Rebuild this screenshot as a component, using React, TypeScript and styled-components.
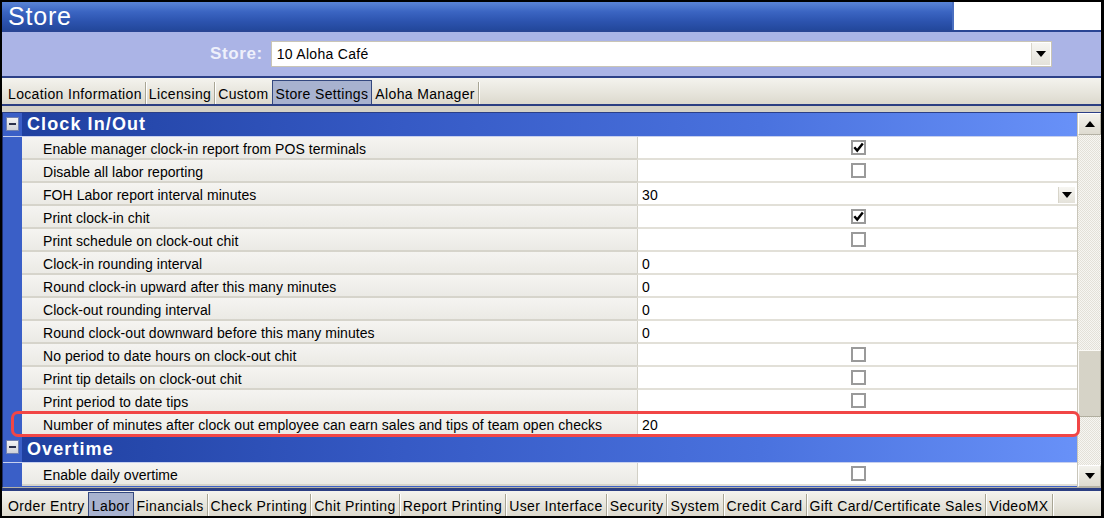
import React from "react";
import styled, { createGlobalStyle } from "styled-components";

const GlobalStyle = createGlobalStyle`
  html, body {
    margin: 0;
    padding: 0;
    background: #fff;
  }
  body {
    font-family: "Liberation Sans", Arial, sans-serif;
  }
`;

const Frame = styled.div`
  width: 1104px;
  height: 518px;
  box-sizing: border-box;
  border: 2px solid #000;
  border-right-width: 3px;
  display: flex;
  flex-direction: column;
  background: #ece9d8;
  overflow: hidden;
`;

/* ---------- title ---------- */

const TitleBar = styled.div`
  display: flex;
  height: 30px;
  flex: none;
  box-sizing: border-box;
  border-bottom: 2px solid #2a4594;
`;

const TitleMain = styled.div`
  flex: 1;
  background: linear-gradient(to bottom, #5a84d6 0%, #3b65c2 35%, #2c53ae 70%, #23489c 100%);
  color: #fff;
  font-size: 25px;
  letter-spacing: 0.8px;
  line-height: 28px;
  padding-left: 6px;
`;

const TitleBlank = styled.div`
  width: 147px;
  background: #fff;
  border-left: 2px solid #4a6fc0;
`;

/* ---------- store picker ---------- */

const StoreBand = styled.div`
  height: 44px;
  flex: none;
  display: flex;
  align-items: center;
  padding-left: 208px;
  background: #abb4e6;
  border-bottom: 2px solid #2d4188;
`;

const StoreLabel = styled.span`
  font-size: 17px;
  font-weight: bold;
  letter-spacing: 0.6px;
  color: #eef0fb;
  margin-right: 8px;
`;

const Combo = styled.div`
  width: 781px;
  height: 26px;
  box-sizing: border-box;
  display: flex;
  align-items: center;
  background: #fff;
  border: 1px solid #c9c5b6;
  padding: 0 1px 0 5px;
  font-size: 14px;
  letter-spacing: 0.3px;
  color: #000;
`;

const ComboText = styled.span`
  flex: 1;
`;

const DropButton = styled.span<{ $small?: boolean }>`
  width: ${(p) => (p.$small ? 16 : 18)}px;
  height: ${(p) => (p.$small ? 16 : 22)}px;
  display: flex;
  align-items: center;
  justify-content: center;
  background: linear-gradient(to bottom, #f7f6f2, #e4e2da);
  border-left: 1px solid #d8d5ca;
`;

const Triangle = styled.span<{ $up?: boolean }>`
  width: 0;
  height: 0;
  border-left: 5px solid transparent;
  border-right: 5px solid transparent;
  ${(p) => (p.$up ? "border-bottom: 6px solid #000;" : "border-top: 6px solid #000;")}
`;

/* ---------- tabs ---------- */

const TabStrip = styled.div<{ $h: number }>`
  height: ${(p) => p.$h}px;
  flex: none;
  display: flex;
  align-items: flex-end;
  padding-left: 3px;
  background: linear-gradient(to bottom, #f4f3ee, #e6e4db 60%, #dcd9cd);
`;

const Tab = styled.div<{ $active?: boolean; $spacing: number }>`
  height: 22px;
  box-sizing: border-box;
  display: flex;
  align-items: center;
  padding: 2px 3px 0 3px;
  font-size: 14px;
  letter-spacing: ${(p) => p.$spacing}px;
  color: #000;
  white-space: nowrap;
  border-right: 1px solid #a8a594;
  box-shadow: 1px 0 0 #fff;
  ${(p) =>
    p.$active &&
    `
    height: 24px;
    background: #a8b2cf;
    border: 1px solid #34487f;
    border-bottom: none;
    box-shadow: none;
    margin-left: -1px;
  `}
`;

/* ---------- property grid ---------- */

const GridWrap = styled.div`
  flex: 1;
  display: flex;
  flex-direction: column;
  border-top: 2px solid #2c3f82;
  padding-top: 6px;
  background: #d4d1c6;
  min-height: 0;
`;

const Grid = styled.div`
  flex: 1;
  display: flex;
  border-top: 1px solid #2b3f86;
  border-left: 1px solid #1f2f6e;
  border-bottom: 1px solid #b5b2a6;
  min-height: 0;
`;

const Rows = styled.div`
  flex: 1;
  display: flex;
  flex-direction: column;
  background: #3a5fc7;
`;

const SectionRow = styled.div<{ $h: number }>`
  height: ${(p) => p.$h}px;
  flex: none;
  display: flex;
  box-sizing: border-box;
  border-bottom: 1px solid #c7d0ee;
`;

const Strip = styled.div`
  width: 19px;
  flex: none;
  display: flex;
  justify-content: center;
  padding-top: 4px;
  box-sizing: border-box;
  background: #3a5fc7;
`;

const MinusBox = styled.span`
  width: 13px;
  height: 14px;
  box-sizing: border-box;
  display: flex;
  align-items: center;
  justify-content: center;
  background: linear-gradient(to bottom, #f4f4f4, #cfd1d8);
  border: 1px solid #7080b0;
  &::after {
    content: "";
    width: 7px;
    height: 2px;
    background: #2a2f4a;
  }
`;

const SectionTitle = styled.div`
  flex: 1;
  display: flex;
  align-items: center;
  padding-left: 5px;
  background: linear-gradient(to right, #1f40a0 0%, #3559c4 35%, #4a72de 70%, #6891f8 100%);
  color: #fff;
  font-size: 18px;
  font-weight: bold;
  letter-spacing: 1.1px;
`;

const Row = styled.div<{ $h?: number }>`
  position: relative;
  height: ${(p) => p.$h ?? 23}px;
  flex: none;
  display: flex;
`;

const LabelCell = styled.div`
  width: 615px;
  flex: none;
  box-sizing: border-box;
  display: flex;
  align-items: center;
  padding: 2px 0 0 21px;
  background: linear-gradient(to bottom, #f5f4f1, #ebeae5);
  border-bottom: 2px solid #d6d4cb;
  font-size: 14px;
  letter-spacing: 0.05px;
  color: #000;
  white-space: nowrap;
`;

const ValueCell = styled.div<{ $center?: boolean }>`
  flex: 1;
  box-sizing: border-box;
  display: flex;
  align-items: center;
  justify-content: ${(p) => (p.$center ? "center" : "space-between")};
  padding: 2px 2px 0 4px;
  background: #fff;
  border-left: 1px solid #d2d0c6;
  border-bottom: 2px solid #e2e0d8;
  font-size: 14px;
  letter-spacing: 0.1px;
  color: #000;
`;

const CheckBox = styled.span`
  width: 15px;
  height: 15px;
  box-sizing: border-box;
  display: flex;
  align-items: center;
  justify-content: center;
  border: 2px solid #9a9a9a;
  background: #fff;
  margin: -2px 0 0 -1px;
`;

const Highlight = styled.div`
  position: absolute;
  left: 8px;
  right: -3px;
  top: -2px;
  bottom: -1px;
  border: 3px solid #f14646;
  border-radius: 7px;
  z-index: 2;
  pointer-events: none;
`;

/* ---------- scrollbar ---------- */

const ScrollBar = styled.div`
  width: 23px;
  flex: none;
  display: flex;
  flex-direction: column;
  background-color: #f3f2ec;
  background-image: repeating-conic-gradient(#e3e1d8 0% 25%, #f7f6f2 0% 50%);
  background-size: 2px 2px;
  border-left: 1px solid #c9c6ba;
`;

const ScrollButton = styled.div`
  height: 22px;
  flex: none;
  box-sizing: border-box;
  display: flex;
  align-items: center;
  justify-content: center;
  background: linear-gradient(to bottom, #f3f2ec, #dedbd0);
  border: 1px solid #b4b1a4;
  border-top-color: #fff;
  border-left-color: #fff;
`;

const Thumb = styled.div`
  height: 67px;
  flex: none;
  margin-top: 215px;
  box-sizing: border-box;
  background: #d6d3c7;
  border: 1px solid #b1ae9f;
  border-top-color: #fbfaf6;
  border-left-color: #fbfaf6;
`;

const TrackFill = styled.div`
  flex: 1;
`;

/* ---------- bottom ---------- */

const BottomLine = styled.div`
  height: 3px;
  flex: none;
  background: #2c3f82;
`;

type Item = {
  label: string;
  kind: "check" | "text" | "select";
  checked?: boolean;
  value?: string;
  highlight?: boolean;
};

const clockRows: Item[] = [
  { label: "Enable manager clock-in report from POS terminals", kind: "check", checked: true },
  { label: "Disable all labor reporting", kind: "check" },
  { label: "FOH Labor report interval minutes", kind: "select", value: "30" },
  { label: "Print clock-in chit", kind: "check", checked: true },
  { label: "Print schedule on clock-out chit", kind: "check" },
  { label: "Clock-in rounding interval", kind: "text", value: "0" },
  { label: "Round clock-in upward after this many minutes", kind: "text", value: "0" },
  { label: "Clock-out rounding interval", kind: "text", value: "0" },
  { label: "Round clock-out downward before this many minutes", kind: "text", value: "0" },
  { label: "No period to date hours on clock-out chit", kind: "check" },
  { label: "Print tip details on clock-out chit", kind: "check" },
  { label: "Print period to date tips", kind: "check" },
  {
    label: "Number of minutes after clock out employee can earn sales and tips of team open checks",
    kind: "text",
    value: "20",
    highlight: true,
  },
];

const overtimeRows: Item[] = [{ label: "Enable daily overtime", kind: "check" }];

const topTabs = ["Location Information", "Licensing", "Custom", "Store Settings", "Aloha Manager"];
const bottomTabs = [
  "Order Entry",
  "Labor",
  "Financials",
  "Check Printing",
  "Chit Printing",
  "Report Printing",
  "User Interface",
  "Security",
  "System",
  "Credit Card",
  "Gift Card/Certificate Sales",
  "VideoMX",
];

const Check = ({ checked }: { checked?: boolean }) => (
  <CheckBox>
    {checked ? (
      <svg width="11" height="11" viewBox="0 0 11 11">
        <path d="M1.3 5.3 L4.2 8.6 L9.8 1.6" fill="none" stroke="#000" strokeWidth="2.4" />
      </svg>
    ) : null}
  </CheckBox>
);

const PropRow = ({ item, h }: { item: Item; h?: number }) => (
  <Row $h={h}>
    <Strip />
    <LabelCell>{item.label}</LabelCell>
    {item.kind === "check" ? (
      <ValueCell $center>
        <Check checked={item.checked} />
      </ValueCell>
    ) : (
      <ValueCell>
        <span>{item.value}</span>
        {item.kind === "select" ? (
          <DropButton $small>
            <Triangle />
          </DropButton>
        ) : null}
      </ValueCell>
    )}
    {item.highlight ? <Highlight /> : null}
  </Row>
);

const Section = ({ title, h }: { title: string; h: number }) => (
  <SectionRow $h={h}>
    <Strip>
      <MinusBox />
    </Strip>
    <SectionTitle>{title}</SectionTitle>
  </SectionRow>
);

export default function App() {
  return (
    <>
      <GlobalStyle />
      <Frame>
        <TitleBar>
          <TitleMain>Store</TitleMain>
          <TitleBlank />
        </TitleBar>

        <StoreBand>
          <StoreLabel>Store:</StoreLabel>
          <Combo>
            <ComboText>10 Aloha Café</ComboText>
            <DropButton>
              <Triangle />
            </DropButton>
          </Combo>
        </StoreBand>

        <TabStrip $h={26}>
          {topTabs.map((t) => (
            <Tab key={t} $spacing={0.35} $active={t === "Store Settings"}>
              {t}
            </Tab>
          ))}
        </TabStrip>

        <GridWrap>
          <Grid>
            <Rows>
              <Section title="Clock In/Out" h={24} />
              {clockRows.map((r) => (
                <PropRow key={r.label} item={r} />
              ))}
              <Section title="Overtime" h={27} />
              {overtimeRows.map((r) => (
                <PropRow key={r.label} item={r} />
              ))}
            </Rows>
            <ScrollBar>
              <ScrollButton>
                <Triangle $up />
              </ScrollButton>
              <Thumb />
              <TrackFill />
              <ScrollButton>
                <Triangle />
              </ScrollButton>
            </ScrollBar>
          </Grid>
        </GridWrap>

        <BottomLine />
        <TabStrip $h={25}>
          {bottomTabs.map((t) => (
            <Tab key={t} $spacing={0.4} $active={t === "Labor"}>
              {t}
            </Tab>
          ))}
        </TabStrip>
      </Frame>
    </>
  );
}
